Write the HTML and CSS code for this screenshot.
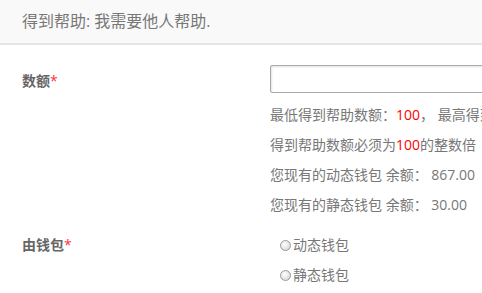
FILE: index.html
```html
<!DOCTYPE html>
<html lang="zh-CN">

<head>
    <meta charset="UTF-8">
    <meta name="viewport" content="width=device-width, initial-scale=1.0">
    <title>得到帮助</title>
    <link rel="stylesheet" href="styles.css">
</head>

<body>
    <div class="page-header">得到帮助: 我需要他人帮助.</div>

    <form class="help-form">
        <div class="form-row">
            <label class="form-label" for="amount">数额<span class="req">*</span></label>
            <div class="form-field">
                <input type="text" id="amount" class="text-input">
                <p class="hint">最低得到帮助数额：<span class="red">100</span>， 最高得到帮助数额：<span class="red">50000</span></p>
                <p class="hint">得到帮助数额必须为<span class="red">100</span>的整数倍</p>
                <p class="hint">您现有的动态钱包 余额： 867.00</p>
                <p class="hint">您现有的静态钱包 余额： 30.00</p>
            </div>
        </div>

        <div class="form-row wallet-row">
            <span class="form-label">由钱包<span class="req">*</span></span>
            <div class="form-field radios">
                <label class="radio"><input type="radio" name="wallet" value="dynamic">动态钱包</label>
                <label class="radio"><input type="radio" name="wallet" value="static">静态钱包</label>
            </div>
        </div>
    </form>
</body>

</html>
```

FILE: styles.css
```css
html, body {
    overflow: hidden;
}

body {
    margin: 0;
    padding: 0;
    background-color: #fff;
    font-family: "Open Sans", "Noto Sans CJK SC", sans-serif;
    color: #777;
}

.page-header {
    height: 43px;
    line-height: 43px;
    padding-left: 22px;
    background-color: #f9f9f9;
    border-bottom: 2px solid #e5e5e5;
    font-size: 16px;
    color: #777;
}

.help-form {
    margin-top: 20px;
    width: 700px;
}

.form-row {
    display: flex;
    align-items: flex-start;
}

.form-label {
    flex-shrink: 0;
    width: 248px;
    padding-left: 22px;
    padding-top: 2px;
    line-height: 28px;
    font-size: 14px;
    font-weight: bold;
    color: #666;
}

.req {
    color: #f33;
    font-weight: normal;
}

.form-field {
    flex: 1;
}

.text-input {
    display: block;
    width: 320px;
    height: 28px;
    margin: 0;
    padding: 0 6px;
    box-sizing: border-box;
    border: 1px solid #aaa;
    border-radius: 2px;
    box-shadow: inset 1px 1px 2px rgba(0, 0, 0, 0.12);
    font-size: 14px;
}

.hint {
    margin: 0;
    line-height: 30px;
    font-size: 14px;
    color: #777;
    white-space: nowrap;
}

.hint:first-of-type {
    margin-top: 7px;
}

.red {
    color: #f00;
}

.wallet-row {
    margin-top: 10px;
}

.wallet-row .form-label {
    padding-top: 0;
    line-height: 30px;
}

.radio {
    display: flex;
    align-items: center;
    padding-left: 10px;
    line-height: 30px;
    font-size: 14px;
    color: #777;
}

.radio input {
    appearance: none;
    width: 11px;
    height: 11px;
    margin: 0 2px 0 0;
    border: 1px solid #999;
    border-radius: 50%;
    background: radial-gradient(circle at 40% 35%, #fff 0%, #e6e6e6 55%, #c8c8c8 100%);
    box-sizing: border-box;
}
```
